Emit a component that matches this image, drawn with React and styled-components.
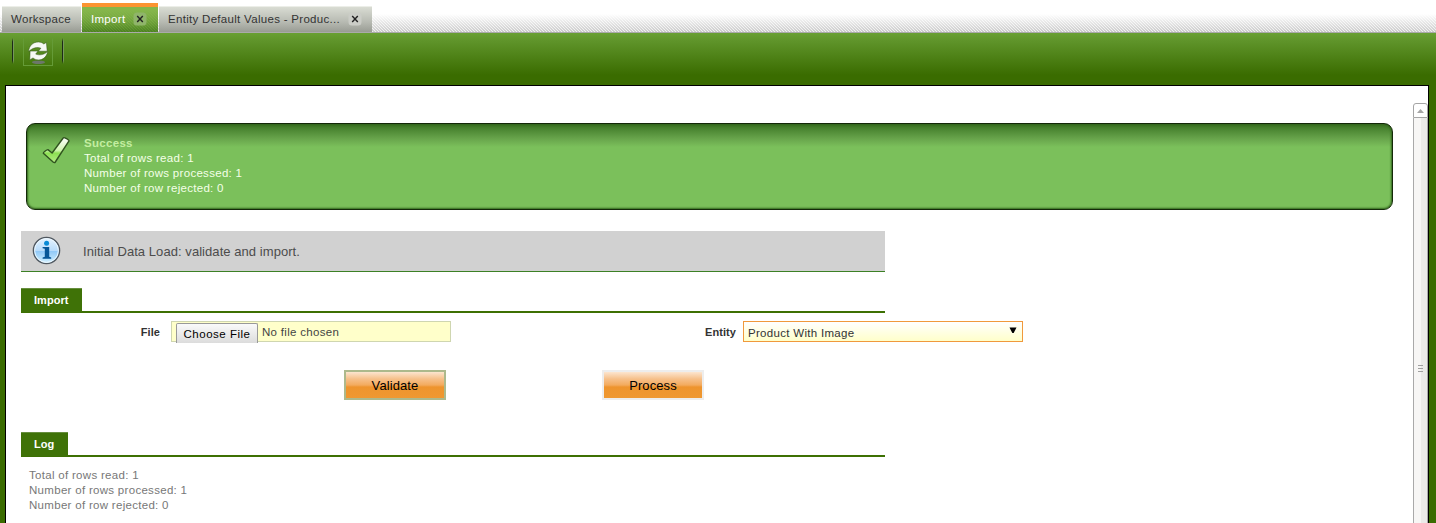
import React from "react";
import styled, { createGlobalStyle, css } from "styled-components";

const GlobalStyle = createGlobalStyle`
  * { box-sizing: border-box; }
  html, body { margin: 0; height: 523px; overflow: hidden; }
  body { font-family: "Liberation Sans", Arial, sans-serif; font-size: 11.5px; letter-spacing: .3px; color: #333; background: #fff; }
`;

const Page = styled.div`
  width: 1436px; height: 523px; display: flex; flex-direction: column; overflow: hidden;
`;

const TabBar = styled.header`
  flex: none; height: 33px; display: flex; align-items: flex-end; gap: 1px; padding-left: 2px;
  border-bottom: 1px solid #aaa;
  background:
    linear-gradient(#fff 14px, rgba(255,255,255,0) 36px),
    linear-gradient(45deg, #c0c0c0 25%, #ebebeb 25% 50%, #c0c0c0 50% 75%, #ebebeb 75%) 0 0 / 3px 3px;
`;

const Tab = styled.div`
  width: ${(p) => p.$width}px; height: 26px; display: flex; align-items: center; padding: 0 0 1px 9px;
  color: #333; white-space: nowrap; border-top: 1px solid #eceee8;
  background: linear-gradient(#d9dcd3, #b7bab2 60%, #999c94);
  ${(p) => p.$active && css`
    height: 29px; color: #fff; border-top: 4px solid #fb9431;
    background:
      linear-gradient(#85b64b 3px, rgba(111,163,59,0) 24px),
      linear-gradient(45deg, rgba(30,80,0,.2) 25%, transparent 25% 50%, rgba(30,80,0,.2) 50% 75%, transparent 75%) 0 0 / 3px 3px,
      linear-gradient(#85b64b, #6fa33b 55%, #598f2b);
  `}
`;

const CloseBox = styled.span`
  width: 12px; height: 12px; margin-left: ${(p) => p.$gap}px; border-radius: 3px; flex: none;
  display: flex; align-items: center; justify-content: center;
  background: ${(p) => (p.$active ? "#8fb56a" : "#cbcdc7")};
  box-shadow: 0 0 0 .5px ${(p) => (p.$active ? "#8fb56a" : "#cbcdc7")};
`;

const Shell = styled.div`
  flex: 1; min-height: 0; display: flex; flex-direction: column; padding: 0 7px 0 5px;
  background: linear-gradient(#69a033, #5f942a 8px, #3a6c00 42px);
`;

const Toolbar = styled.div`
  flex: none; height: 52px; display: flex; align-items: flex-start; padding: 5px 0 0 7px;
`;

const Divider = styled.span`
  width: 2px; height: 26px; margin-right: ${(p) => p.$gap || 0}px;
  background: linear-gradient(90deg, #1c2b18 1px, #76985c 1px);
  mask-image: linear-gradient(transparent, #000 15%, #000 85%, transparent);
`;

const ToolButton = styled.button`
  width: 30px; height: 28px; padding: 0; margin-right: 9px; background: none;
  border: 1px solid #659b37; border-top-color: transparent; display: flex;
`;

const Panel = styled.main`
  flex: 1; min-height: 0; display: flex; justify-content: space-between; background: #fff;
  border: 1px solid #000; border-bottom: 0;
`;

const Content = styled.div`
  width: 1387px; padding: 37px 0 0 15px;
`;

const Alert = styled.section`
  margin-left: 5px; width: 1367px; height: 87px; display: flex; padding: 12px 0 0 14px;
  border-radius: 9px; border: 1px solid #142909;
  background: linear-gradient(#397020, #4d8834 6px, #66a24a 14px, #7bc05b 23px);
  box-shadow: inset 0 0 2px 1px #32651d;
`;

const Lines = styled.div`
  margin: ${(p) => p.$top || 0}px 0 0 ${(p) => p.$indent}px; color: ${(p) => p.$color};
  line-height: 15px; white-space: nowrap;
  strong { color: #c3eea0; }
`;

const Info = styled.div`
  width: 864px; height: 41px; margin-top: 21px; padding-left: 11px; display: flex; align-items: center;
  background: #d1d1d1; border-bottom: 1px solid #3c8025; font-size: 13px; letter-spacing: .06px; color: #4c4c4c;
  svg { margin-right: 21px; margin-top: -2px; }
`;

const SectionHead = styled.div`
  width: 864px; height: 25px; margin-top: ${(p) => p.$top}px; border-bottom: 2px solid #3d7003; display: flex;
`;

const SectionTitle = styled.h2`
  margin: 0; width: ${(p) => p.$width}px; height: 24px; padding-left: 13px; line-height: 23px; letter-spacing: .06px;
  background: #3f7207; border-top: 1px solid #678e3f; color: #fff; font-size: 11px; font-weight: bold;
`;

const FormRow = styled.div`
  display: flex; height: 21px; margin-top: 8px;
`;

const Label = styled.label`
  width: ${(p) => p.$width}px; padding-right: ${(p) => p.$gap}px; text-align: right; font-size: 11px;
  line-height: 22px; font-weight: bold; color: #333; letter-spacing: .06px;
`;

const FileField = styled.div`
  width: 280px; height: 21px; border: 1px solid #cfd6b0; background: #ffffca; display: flex;
  padding: 1px 0 0 4px; line-height: 18px; color: #444;
`;

const ChooseButton = styled.span`
  width: 82px; height: 20px; flex: none; margin-right: 4px; padding-top: 1px; text-align: center; color: #000;
  border: 1px solid #999; border-bottom: 0; border-radius: 2px 2px 0 0; line-height: 19px;
  background: linear-gradient(#fafafa, #dcdcdc); letter-spacing: .5px;
`;

const Select = styled.div`
  width: 280px; height: 21px; border: 1px solid #f0993c; background: linear-gradient(#fff, #ffffca);
  display: flex; justify-content: space-between; padding: 0 5px 0 4px; line-height: 22px; color: #333;
  svg { margin-top: 5px; }
`;

const Actions = styled.div`
  display: flex; gap: 156px; margin: 28px 0 0 323px;
`;

const Action = styled.button`
  width: 102px; height: 30px; padding: 0; font: 13px "Liberation Sans", Arial, sans-serif; color: #000;
  letter-spacing: .1px; border: 2px solid ${(p) => p.$border};
  background: linear-gradient(#fce5cf, #f6c08a 7px, #f3ab5e 13px, #ee942d 15px, #ef9831);
`;

const Scroll = styled.div`
  width: 15px; margin: 17px 0 0; display: flex; flex-direction: column;
`;

const ScrollUp = styled.div`
  height: 15px; border: 1px solid #a5a5a5; border-radius: 3px 3px 0 0; background: #fff;
  display: flex; align-items: center; justify-content: center;
`;

const Track = styled.div`
  flex: 1; border: 1px solid #a9a9a9; border-width: 0 1px;
  background: linear-gradient(90deg, #f7f6f5 7px, #ebeae8 7px);
  display: flex; flex-direction: column; align-items: center; gap: 2px; padding-top: 247px;
`;

const Grip = styled.i`
  width: 5px; height: 1px; background: #a0a0a0;
`;

function Close({ gap, active }) {
  return (
    <CloseBox $gap={gap} $active={active}>
      <svg width="8" height="8" viewBox="0 0 8 8">
        <path d="M1.2 1l5.6 6M6.8 1L1.2 7" stroke="#222" strokeWidth="1.4" />
      </svg>
    </CloseBox>
  );
}

function RefreshIcon() {
  return (
    <svg width="28" height="27" viewBox="0 0 28 27">
      <ellipse cx="14.5" cy="23.2" rx="6.5" ry="1.8" fill="#6c776a" />
      <g fill="#f5f8f3" stroke="#2f5312" strokeWidth=".5">
        <path d="M4.6 12.6C5 6.8 9 2.8 14.6 3c2.2.1 3.8.7 5.2 2l2.6-1.6.8 8.8h-8.8l2.5-3C13 7.8 8.5 8.8 4.6 12.6z" />
        <path d="M23.6 12.6c-.8 5.2-4.6 8.5-9.4 8.3-2.2-.1-3.9-.8-5.2-2l-3.2 2 .3-8.8h7.9l-2.3 3c3.6 1.4 8 .9 11.9-2.5z" />
      </g>
    </svg>
  );
}

function CheckIcon() {
  return (
    <svg width="31" height="30" viewBox="0 0 31 30">
      <defs>
        <linearGradient id="check" x1="0" y1="0" x2="0" y2="1">
          <stop offset="0" stopColor="#fff" />
          <stop offset=".5" stopColor="#d1f5b0" />
          <stop offset=".62" stopColor="#8ce052" />
          <stop offset="1" stopColor="#b5ed86" />
        </linearGradient>
      </defs>
      <path d="M2.3 17.2c-.3-.8 4-4 4.6-3.6l4.2 3.4L22.2 2c.7-1 6.3 2 5.8 2.9L14.3 26c-.5.8-1.2.8-1.9.3z" fill="url(#check)" stroke="#30531f" strokeWidth="1.4" strokeLinejoin="round" />
    </svg>
  );
}

function InfoIcon() {
  return (
    <svg width="30" height="30" viewBox="0 0 30 30">
      <defs>
        <linearGradient id="info" x1="0" y1="0" x2="0" y2="1">
          <stop offset="0" stopColor="#e9f5ff" />
          <stop offset=".5" stopColor="#b9dcfb" />
          <stop offset=".52" stopColor="#8fc8f8" />
          <stop offset="1" stopColor="#d4f2ff" />
        </linearGradient>
      </defs>
      <circle cx="14.5" cy="15.5" r="13.1" fill="url(#info)" stroke="#505860" strokeWidth="1.4" />
      <circle cx="14.5" cy="15.5" r="11.9" fill="none" stroke="#edf8ff" strokeWidth="1" />
      <circle cx="14.6" cy="8.2" r="2.5" fill="#0b8bd6" />
      <path d="M10.6 12h6.6v9.8l2 .6v1.4h-8.6v-1.4l2.2-.6v-8l-2.2-.5z" fill="#075698" />
    </svg>
  );
}

const summary = ["Total of rows read: 1", "Number of rows processed: 1", "Number of row rejected: 0"];

export default function App() {
  return (
    <Page>
      <GlobalStyle />
      <TabBar>
        <Tab $width={79}>Workspace</Tab>
        <Tab $width={76} $active>Import<Close gap={9} active /></Tab>
        <Tab $width={213}>Entity Default Values - Produc...<Close gap={9} /></Tab>
      </TabBar>
      <Shell>
        <Toolbar>
          <Divider $gap={9} />
          <ToolButton aria-label="Refresh"><RefreshIcon /></ToolButton>
          <Divider />
        </Toolbar>
        <Panel>
          <Content>
            <Alert>
              <CheckIcon />
              <Lines $indent={12} $color="#f4ffe8">
                <strong>Success</strong>
                {summary.map((line) => <div key={line}>{line}</div>)}
              </Lines>
            </Alert>
            <Info><InfoIcon />Initial Data Load: validate and import.</Info>
            <SectionHead $top={16}><SectionTitle $width={61}>Import</SectionTitle></SectionHead>
            <FormRow>
              <Label $width={150} $gap={11}>File</Label>
              <FileField><ChooseButton>Choose File</ChooseButton>No file chosen</FileField>
              <Label $width={292} $gap={7}>Entity</Label>
              <Select>
                Product With Image
                <svg width="8" height="7" viewBox="0 0 8 7"><path d="M.5.5h7L4.7 6H3.3z" fill="#000" /></svg>
              </Select>
            </FormRow>
            <Actions>
              <Action $border="#adb98c">Validate</Action>
              <Action $border="#ededed">Process</Action>
            </Actions>
            <SectionHead $top={32}><SectionTitle $width={47}>Log</SectionTitle></SectionHead>
            <Lines $top={11} $indent={8} $color="#777">
              {summary.map((line) => <div key={line}>{line}</div>)}
            </Lines>
          </Content>
          <Scroll>
            <ScrollUp>
              <svg width="7" height="4" viewBox="0 0 7 4"><path d="M0 4l3.5-4L7 4z" fill="#a5a5a5" /></svg>
            </ScrollUp>
            <Track><Grip /><Grip /><Grip /></Track>
          </Scroll>
        </Panel>
      </Shell>
    </Page>
  );
}
